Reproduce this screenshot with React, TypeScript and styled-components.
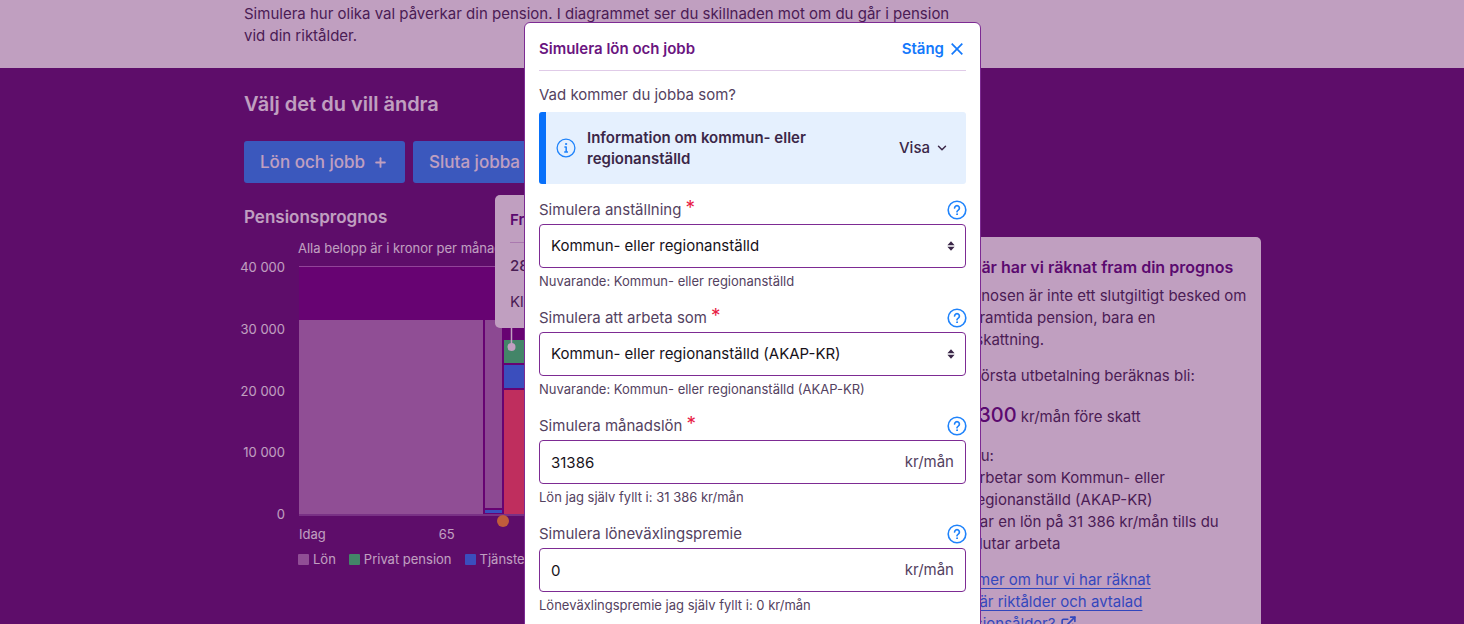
import React, { useId, useState } from "react";
import styled, { createGlobalStyle } from "styled-components";
import { ChevronDown, ExternalLink, Plus } from "lucide-react";

const GlobalStyle = createGlobalStyle`
  *, *::before, *::after { box-sizing: border-box; }
  body {
    margin: 0;
    overflow: hidden;
    background: #621576;
    color: #433053;
    font-family: Inter, "Liberation Sans", sans-serif;
    font-size: 15px;
    line-height: 22px;
  }
  h1, h2, h3, p, ul { margin: 0; }
  button, input, select { font: inherit; }
`;

const Page = styled.div`
  min-height: 100vh;
`;

const Intro = styled.header`
  background: #fff;
  padding: 3px 203px 21px 244px;
`;

const IntroText = styled.p`
  max-width: 720px;
`;

const Main = styled.main`
  padding: 22px 203px 24px 244px;
`;

const SectionTitle = styled.h2`
  color: #fff;
  font-size: 20px;
  line-height: 28px;
  font-weight: 600;
`;

const ChoiceBar = styled.div`
  display: flex;
  gap: 8px;
  margin-top: 23px;
`;

const ChoiceButton = styled.button`
  display: flex;
  align-items: center;
  gap: 8px;
  height: 42px;
  padding: 0 17px 0 16px;
  border: 0;
  border-radius: 3px;
  background: #2b8dfb;
  color: #fff;
  font-size: 17px;
  font-weight: 550;
  white-space: nowrap;
`;

const Columns = styled.div`
  display: grid;
  grid-template-columns: minmax(0, 1fr) 329px;
  gap: 24px;
  margin-top: 22px;
`;

const Forecast = styled.section`
  position: relative;
  color: #fff;
`;

const ForecastTitle = styled.h3`
  color: #fff;
  font-size: 17px;
  line-height: 24px;
  font-weight: 600;
`;

const ChartCaption = styled.p`
  margin: 11px 0 0 54px;
  font-size: 13px;
  line-height: 17px;
`;

const ChartGrid = styled.div`
  display: grid;
  grid-template-columns: 41px minmax(0, 1fr);
  column-gap: 14px;
`;

const YAxis = styled.div`
  display: flex;
  flex-direction: column;
  align-items: flex-end;
  justify-content: space-between;
  height: 267px;
  font-size: 13px;
  line-height: 20px;
  white-space: nowrap;
`;

const Plot = styled.svg`
  display: block;
  width: 100%;
  height: 266px;
`;

const XAxis = styled.div`
  display: flex;
  gap: 113px;
  margin-left: 55px;
  font-size: 13px;
  line-height: 20px;
`;

const Legend = styled.ul`
  display: flex;
  gap: 13px;
  margin: 5px 0 0 54px;
  padding: 0;
  list-style: none;
  font-size: 13px;
  line-height: 20px;
`;

const LegendItem = styled.li<{ $color: string }>`
  display: flex;
  align-items: center;
  gap: 4px;
  white-space: nowrap;
  &::before {
    content: "";
    width: 11px;
    height: 11px;
    border-radius: 1px;
    background: ${(p) => p.$color};
  }
`;

const ChartTip = styled.div`
  position: absolute;
  left: 251px;
  top: -10px;
  width: 190px;
  height: 133px;
  padding: 14px 15px;
  border-radius: 5px;
  background: #fff;
  color: #433053;
`;

const TipTitle = styled.p`
  padding-bottom: 11px;
  margin-bottom: 12px;
  border-bottom: 1px solid #dcc3e4;
  color: #5e107e;
  font-weight: 600;
`;

const TipText = styled.p<{ $strong?: boolean }>`
  margin-bottom: 14px;
  font-weight: ${(p) => (p.$strong ? 500 : 400)};
`;

const Markers = styled.svg`
  position: absolute;
  left: 251px;
  top: 123px;
  width: 30px;
  height: 200px;
`;

const Summary = styled.aside`
  margin-top: 32px;
  padding: 19px 8px 19px 16px;
  border-radius: 5px;
  background: #fff;
`;

const SummaryTitle = styled.h3`
  color: #5e107e;
  font-size: 16px;
  line-height: 22px;
  font-weight: 600;
`;

const SummaryText = styled.p<{ $gap?: number }>`
  margin-top: ${(p) => p.$gap ?? 0}px;
`;

const Amount = styled.strong`
  color: #5e107e;
  font-size: 20px;
  font-weight: 500;
`;

const SummaryList = styled.ul`
  padding-left: 23px;
`;

const SummaryLink = styled.a`
  color: #1b73fb;
  text-underline-offset: 3px;
  svg { vertical-align: -3px; }
`;

const Backdrop = styled.div`
  position: fixed;
  inset: 0;
  display: flex;
  justify-content: center;
  align-items: flex-start;
  overflow: hidden;
  padding: 22px 203px 0 244px;
  background: rgba(88, 0, 88, 0.375);
`;

const Dialog = styled.section`
  flex: 0 1 457px;
  padding: 15px 14px 16px;
  border: 1px solid #7d2b93;
  border-radius: 6px;
  background: #fff;
`;

const DialogHeader = styled.header`
  display: flex;
  justify-content: space-between;
  align-items: center;
  padding-bottom: 10px;
  border-bottom: 1px solid #e0cbe8;
`;

const DialogTitle = styled.h2`
  color: #6a1580;
  font-size: 15px;
  line-height: 22px;
  font-weight: 600;
`;

const TextButton = styled.button<{ $blue?: boolean }>`
  display: flex;
  align-items: center;
  gap: ${(p) => (p.$blue ? 7 : 5)}px;
  padding: ${(p) => (p.$blue ? "0 3px 0 0" : "0")};
  border: 0;
  background: none;
  color: ${(p) => (p.$blue ? "#1479fb" : "#3b2748")};
  font-weight: ${(p) => (p.$blue ? 600 : 500)};
`;

const Question = styled.p`
  margin-top: 13px;
  color: #54425f;
`;

const InfoBox = styled.div`
  display: flex;
  align-items: center;
  gap: 11px;
  margin-top: 6px;
  padding: 15px 17px 15px 10px;
  border-left: 7px solid #0870fa;
  border-radius: 3px;
  background: #e5f0fe;
`;

const InfoTitle = styled.p`
  flex: 1;
  max-width: 240px;
  margin-right: auto;
  color: #3b2748;
  line-height: 21px;
  font-weight: 600;
`;

const RoundIcon = styled.svg`
  display: block;
  flex: none;
  width: 20px;
  height: 20px;
  fill: none;
  stroke: #1f83fb;
  stroke-linecap: round;
  stroke-linejoin: round;
`;

const Fields = styled.div`
  display: grid;
  gap: 17px;
  padding-top: 15px;
`;

const FieldHead = styled.div`
  display: flex;
  justify-content: space-between;
  height: 25px;
`;

const FieldLabel = styled.label`
  display: flex;
  gap: 4px;
  color: #54425f;
`;

const Required = styled.span`
  color: #e81c45;
  font-size: 19px;
  line-height: 17px;
`;

const HelpButton = styled.button`
  height: 20px;
  margin: 1px -1px 0 0;
  padding: 0;
  border: 0;
  background: none;
`;

const Control = styled.div`
  position: relative;
  display: flex;
  align-items: center;
  height: 44px;
  border: 1px solid #7d2b93;
  border-radius: 4px;
  background: #fff;
`;

const Select = styled.select`
  appearance: none;
  width: 100%;
  height: 100%;
  padding: 0 32px 0 11px;
  border: 0;
  background: none;
  color: #17121a;
`;

const SelectArrows = styled.svg`
  position: absolute;
  right: 10px;
  width: 8px;
  height: 10px;
  fill: #3b2748;
  pointer-events: none;
`;

const TextInput = styled.input`
  flex: 1;
  min-width: 0;
  height: 100%;
  padding: 0 11px;
  border: 0;
  background: none;
  color: #17121a;
`;

const Unit = styled.span`
  padding-right: 11px;
  color: #54425f;
`;

const Hint = styled.p`
  margin-top: 4px;
  color: #54425f;
  font-size: 13px;
  line-height: 18px;
`;

const CloseIcon = () => (
  <svg width="12" height="12" viewBox="0 0 12 12" stroke="currentColor" strokeWidth="1.7" aria-hidden="true">
    <path d="M0.7 0.7 11.3 11.3M11.3 0.7 0.7 11.3" />
  </svg>
);

const QuestionIcon = () => (
  <RoundIcon viewBox="0 0 20 20" aria-hidden="true">
    <circle cx="10" cy="10" r="8.8" strokeWidth="1.6" />
    <path d="M7.6 8a2.4 2.4 0 1 1 3.7 2.1c-.9.6-1.3.9-1.3 1.6" strokeWidth="1.7" />
    <circle cx="10" cy="14.2" r="0.5" strokeWidth="1" fill="#1f83fb" />
  </RoundIcon>
);

const InfoIcon = () => (
  <RoundIcon viewBox="0 0 20 20" aria-hidden="true">
    <circle cx="10" cy="10" r="8.9" strokeWidth="1.3" />
    <path d="M8.4 9h1.8v5M8.2 14h3.8" strokeWidth="1.5" strokeLinecap="butt" />
    <circle cx="10" cy="6" r="0.6" strokeWidth="1" fill="#1f83fb" />
  </RoundIcon>
);

type FieldProps = {
  label: string;
  hint: string;
  required?: boolean;
  options?: string[];
  value?: string;
};

function Field({ label, hint, required, options, value }: FieldProps) {
  const id = useId();
  const [text, setText] = useState(value ?? "");
  return (
    <div>
      <FieldHead>
        <FieldLabel htmlFor={id}>
          {label}
          {required && <Required>*</Required>}
        </FieldLabel>
        <HelpButton type="button" aria-label={`Hjälp: ${label}`}>
          <QuestionIcon />
        </HelpButton>
      </FieldHead>
      <Control>
        {options ? (
          <>
            <Select id={id}>
              {options.map((o) => (
                <option key={o}>{o}</option>
              ))}
            </Select>
            <SelectArrows viewBox="0 0 8 10" aria-hidden="true">
              <path d="M4 0.3 7.6 4.2H0.4zM4 9.7 7.6 5.8H0.4z" />
            </SelectArrows>
          </>
        ) : (
          <>
            <TextInput id={id} value={text} onChange={(e) => setText(e.target.value)} />
            <Unit>kr/mån</Unit>
          </>
        )}
      </Control>
      <Hint>{hint}</Hint>
    </div>
  );
}

function PensionChart() {
  return (
    <Plot aria-label="Pensionsprognos">
      <rect x="0" y="10" width="100%" height="248" fill="#700682" />
      <rect x="0" y="9" width="100%" height="1" fill="#b56cc0" />
      <rect x="0" y="63" width="184" height="194" fill="#b37dbb" />
      <rect x="186" y="63" width="17" height="188" fill="#ac76b6" />
      <rect x="186" y="253" width="17" height="3" fill="#2b7dfb" />
      <rect x="205" y="83" width="200" height="23" fill="#37d573" />
      <rect x="205" y="108" width="200" height="23" fill="#2b7dfb" />
      <rect x="205" y="133" width="200" height="124" fill="#fe4a62" />
      <rect x="0" y="257" width="100%" height="2" fill="#8d4fa0" />
    </Plot>
  );
}

export default function App() {
  return (
    <>
      <GlobalStyle />
      <Page>
        <Intro>
          <IntroText>
            Simulera hur olika val påverkar din pension. I diagrammet ser du skillnaden mot om du går i pension
            <br />
            vid din riktålder.
          </IntroText>
        </Intro>
        <Main>
          <SectionTitle>Välj det du vill ändra</SectionTitle>
          <ChoiceBar>
            <ChoiceButton type="button">
              Lön och jobb <Plus size={15} strokeWidth={3} />
            </ChoiceButton>
            <ChoiceButton type="button">
              Sluta jobba <Plus size={15} strokeWidth={3} />
            </ChoiceButton>
          </ChoiceBar>
          <Columns>
            <Forecast>
              <ForecastTitle>Pensionsprognos</ForecastTitle>
              <ChartCaption>Alla belopp är i kronor per månad</ChartCaption>
              <ChartGrid>
                <YAxis>
                  <span>40 000</span>
                  <span>30 000</span>
                  <span>20 000</span>
                  <span>10 000</span>
                  <span>0</span>
                </YAxis>
                <PensionChart />
              </ChartGrid>
              <XAxis>
                <span>Idag</span>
                <span>65</span>
              </XAxis>
              <Legend>
                <LegendItem $color="#b37dbb">Lön</LegendItem>
                <LegendItem $color="#37d573">Privat pension</LegendItem>
                <LegendItem $color="#2b7dfb">Tjänstepension</LegendItem>
              </Legend>
              <ChartTip>
                <TipTitle>Från 67 år</TipTitle>
                <TipText $strong>28 300 kr/mån</TipText>
                <TipText>Klicka för mer</TipText>
              </ChartTip>
              <Markers viewBox="0 0 30 200" aria-hidden="true">
                <path d="M16.5 0v20" stroke="#fff" strokeWidth="1.5" />
                <circle cx="16.5" cy="19" r="4" fill="#fff" />
                <circle cx="8" cy="193" r="6" fill="#ff952b" />
              </Markers>
            </Forecast>
            <Summary>
              <SummaryTitle>Så här har vi räknat fram din prognos</SummaryTitle>
              <SummaryText $gap={7}>
                Prognosen är inte ett slutgiltigt besked om
                <br />
                din framtida pension, bara en
                <br />
                uppskattning.
              </SummaryText>
              <SummaryText $gap={14}>Din första utbetalning beräknas bli:</SummaryText>
              <SummaryText $gap={17}>
                <Amount>28 300</Amount> kr/mån före skatt
              </SummaryText>
              <SummaryText $gap={17}>Då du:</SummaryText>
              <SummaryList>
                <li>
                  arbetar som Kommun- eller
                  <br />
                  regionanställd (AKAP-KR)
                </li>
                <li>
                  har en lön på 31 386 kr/mån tills du
                  <br />
                  slutar arbeta
                </li>
              </SummaryList>
              <SummaryText $gap={14}>
                <SummaryLink href="#berakning">Läs mer om hur vi har räknat</SummaryLink>
              </SummaryText>
              <SummaryText>
                <SummaryLink href="#riktalder">
                  Vad är riktålder och avtalad
                  <br />
                  pensionsålder? <ExternalLink size={17} strokeWidth={2.3} />
                </SummaryLink>
              </SummaryText>
            </Summary>
          </Columns>
        </Main>
      </Page>
      <Backdrop>
        <Dialog role="dialog" aria-modal="true" aria-label="Simulera lön och jobb">
          <DialogHeader>
            <DialogTitle>Simulera lön och jobb</DialogTitle>
            <TextButton type="button" $blue>
              Stäng <CloseIcon />
            </TextButton>
          </DialogHeader>
          <Question>Vad kommer du jobba som?</Question>
          <InfoBox>
            <InfoIcon />
            <InfoTitle>Information om kommun- eller regionanställd</InfoTitle>
            <TextButton type="button">
              Visa <ChevronDown size={14} strokeWidth={2.5} />
            </TextButton>
          </InfoBox>
          <Fields>
            <Field
              label="Simulera anställning"
              required
              options={["Kommun- eller regionanställd"]}
              hint="Nuvarande: Kommun- eller regionanställd"
            />
            <Field
              label="Simulera att arbeta som"
              required
              options={["Kommun- eller regionanställd (AKAP-KR)"]}
              hint="Nuvarande: Kommun- eller regionanställd (AKAP-KR)"
            />
            <Field label="Simulera månadslön" required value="31386" hint="Lön jag själv fyllt i: 31 386 kr/mån" />
            <Field label="Simulera löneväxlingspremie" value="0" hint="Löneväxlingspremie jag själv fyllt i: 0 kr/mån" />
          </Fields>
        </Dialog>
      </Backdrop>
    </>
  );
}
